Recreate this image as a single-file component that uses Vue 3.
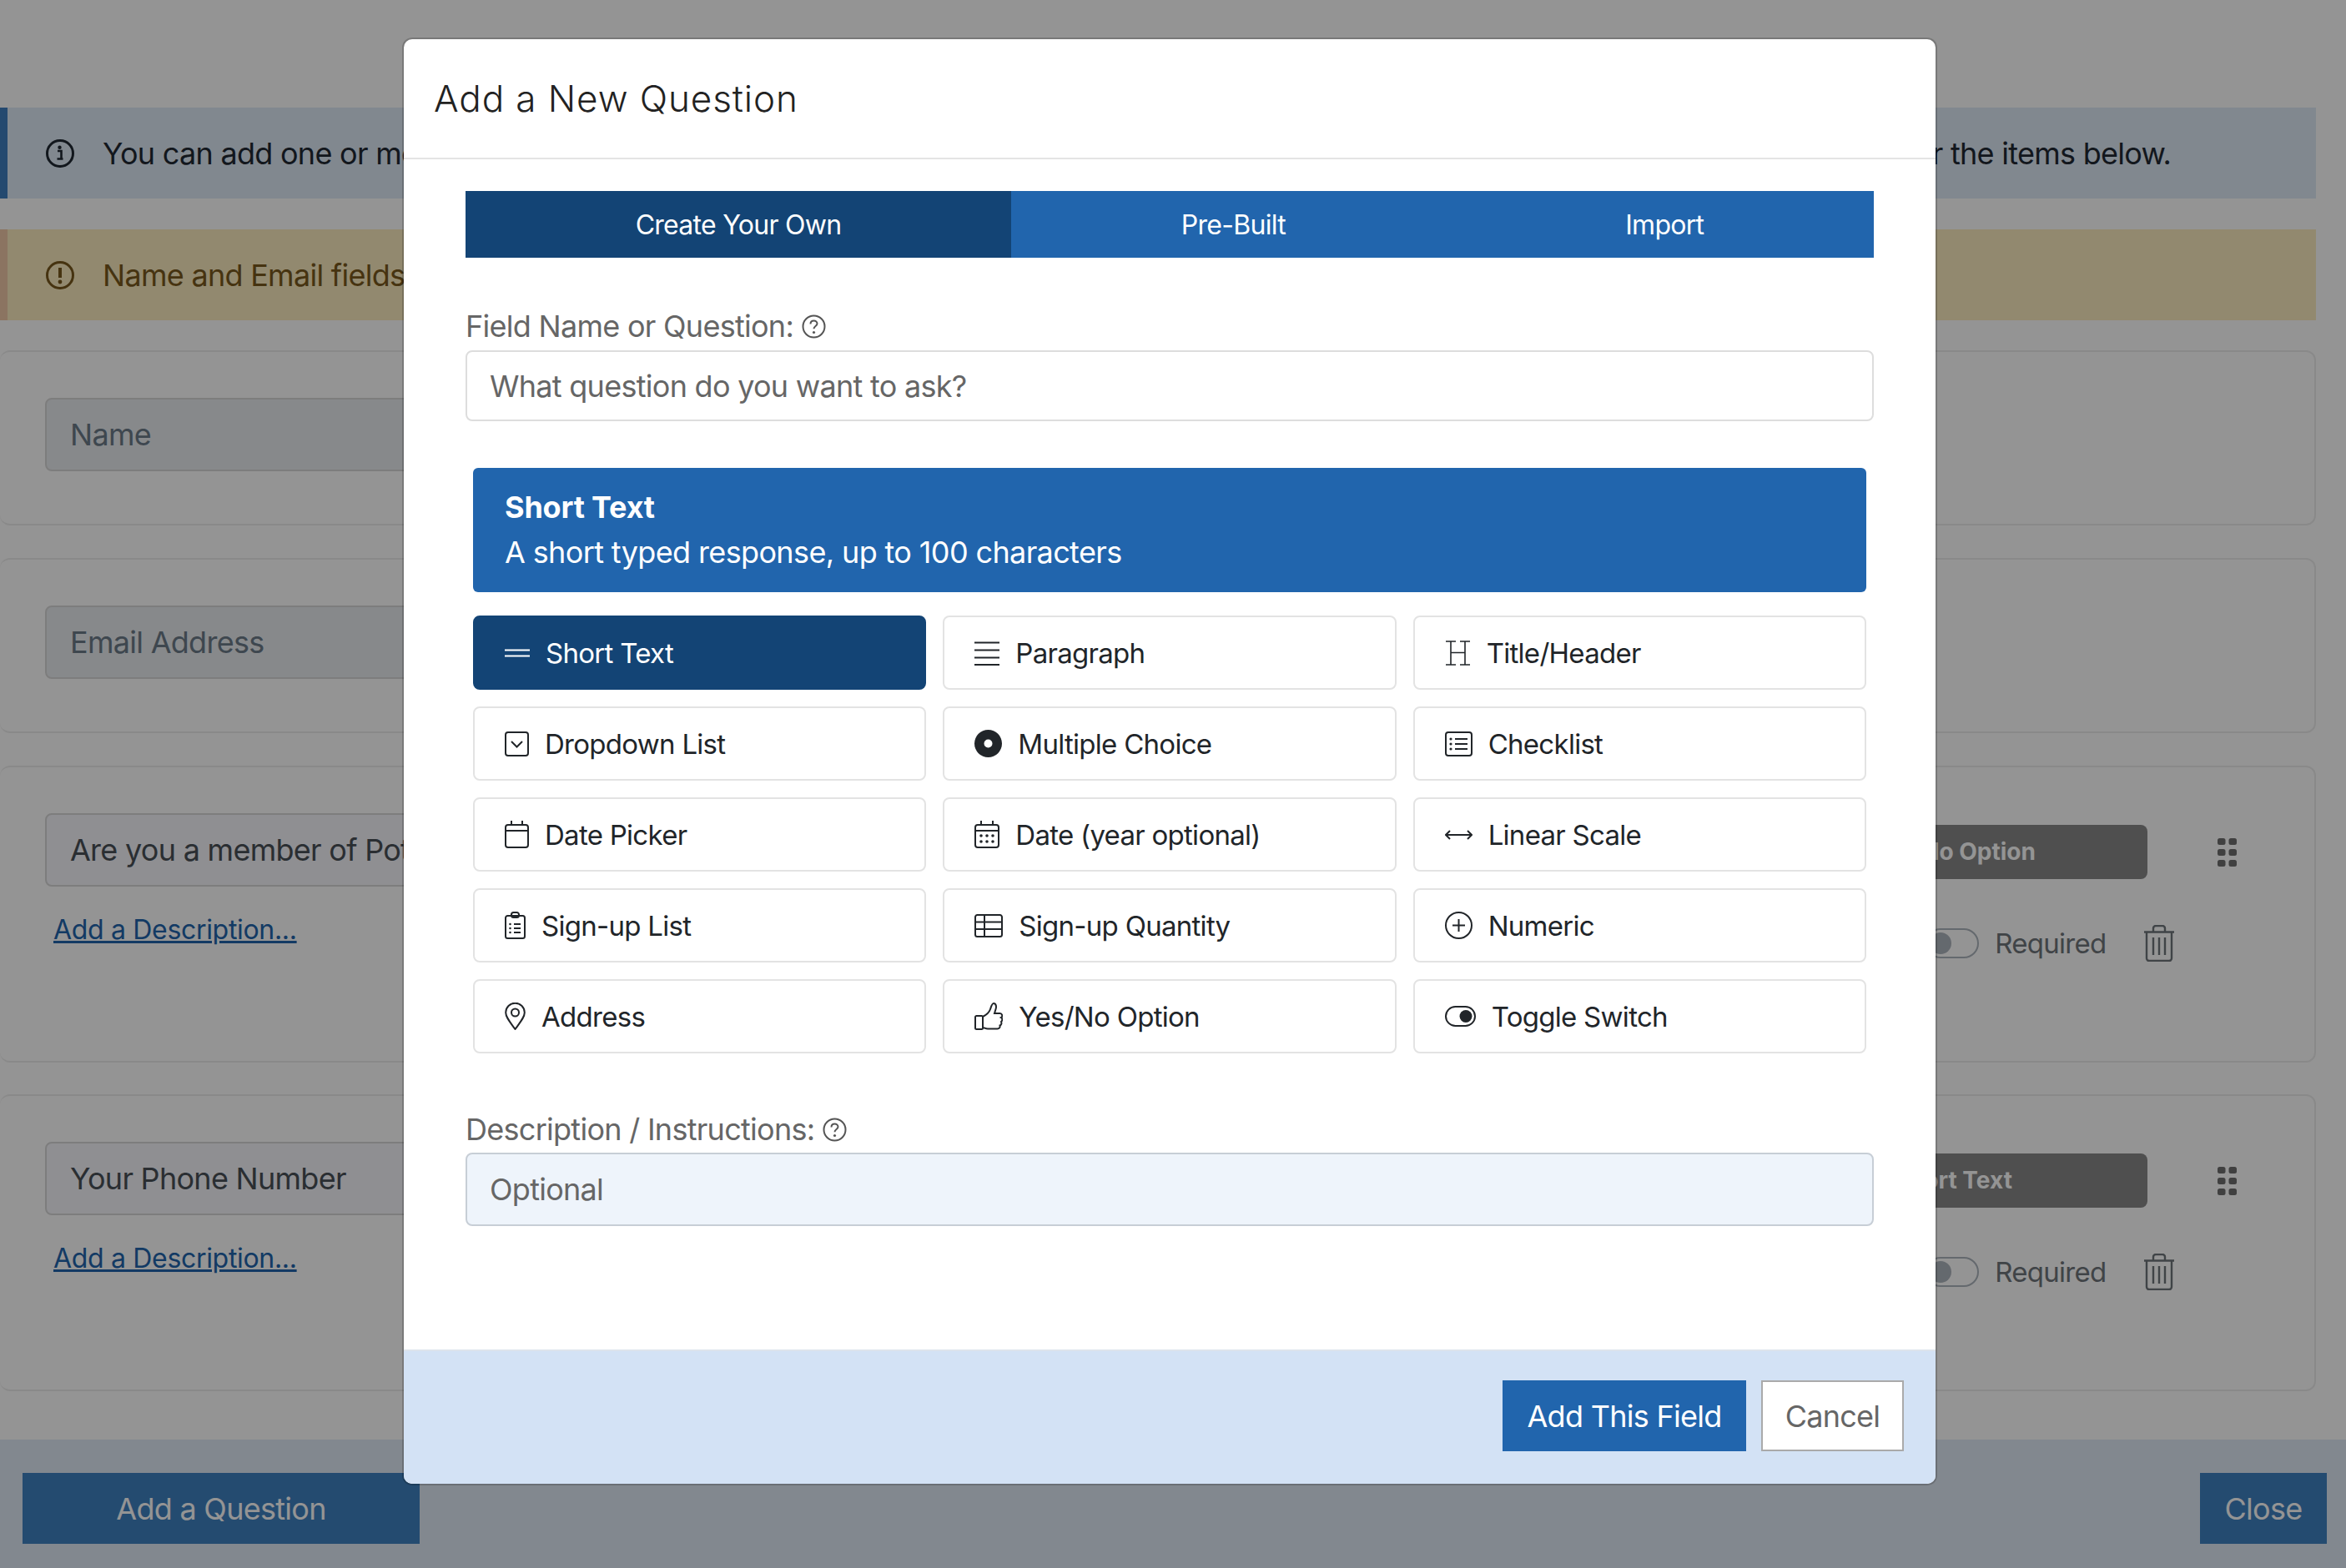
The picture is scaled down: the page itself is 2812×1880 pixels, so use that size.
<script setup>
const rr = (x, y, w, h, r) =>
  `M${x + r} ${y}h${w - 2 * r}a${r} ${r} 0 0 1 ${r} ${r}v${h - 2 * r}a${r} ${r} 0 0 1 ${-r} ${r}h${-(w - 2 * r)}a${r} ${r} 0 0 1 ${-r} ${-r}v${-(h - 2 * r)}a${r} ${r} 0 0 1 ${r} ${-r}z`
const circle = (cx, cy, r) =>
  `M${cx - r} ${cy}a${r} ${r} 0 1 0 ${2 * r} 0a${r} ${r} 0 1 0 ${-2 * r} 0z`

const types = [
  { name: 'Short Text', w: 30, h: 30, line: 'M0 11.5h30M0 18.5h30', active: true },
  { name: 'Paragraph', w: 30, h: 30, line: 'M0 2.5h30M0 11.5h30M0 20.5h30M0 29h30' },
  { name: 'Title/Header', w: 31, h: 30, sw: 1.6, line: 'M1 1h12M18 1h12M7 1v28M24 1v28M7 14.5h17M1 29h12M18 29h12' },
  { name: 'Dropdown List', w: 29, h: 30, line: rr(1, 1, 27, 28, 3) + 'M8 12l6.5 6.5L21 12' },
  { name: 'Multiple Choice', w: 33, h: 33, fill: circle(16.5, 16.5, 16.5) + circle(16.5, 16.5, 5) },
  { name: 'Checklist', w: 33, h: 30, line: rr(1, 1, 31, 28, 3) + 'M12 9h15M12 15h15M12 21h15', fill: circle(7, 9, 1.6) + circle(7, 15, 1.6) + circle(7, 21, 1.6) },
  { name: 'Date Picker', w: 29, h: 33, line: rr(1, 5, 27, 27, 3) + 'M1 12h27M8 0v6M21 0v6' },
  { name: 'Date (year optional)', w: 30, h: 33, line: rr(1, 5, 28, 27, 3) + 'M1 12h28M8 0v6M22 0v6', fill: circle(8, 18, 1.8) + circle(15, 18, 1.8) + circle(22, 18, 1.8) + circle(8, 25, 1.8) + circle(15, 25, 1.8) + circle(22, 25, 1.8) },
  { name: 'Linear Scale', w: 33, h: 16, line: 'M1 8h31M6 3L1 8l5 5M27 3l5 5-5 5' },
  { name: 'Sign-up List', w: 25, h: 33, line: rr(1, 5, 23, 27, 2.5) + rr(8, 1, 9, 6, 2.5) + 'M11 15h8M11 20h8M11 25h8', fill: circle(6.5, 15, 1.3) + circle(6.5, 20, 1.3) + circle(6.5, 25, 1.3) },
  { name: 'Sign-up Quantity', w: 34, h: 28, line: rr(1, 1, 32, 26, 2.5) + 'M1 9.5h32M1 18h32M12 1v26' },
  { name: 'Numeric', w: 33, h: 33, line: circle(16.5, 16.5, 15.5) + 'M16.5 9v15M9 16.5h15' },
  { name: 'Address', w: 25, h: 33, line: 'M12.5 32C6 23 1.2 17.5 1.2 12A11.3 11.3 0 0 1 23.8 12C23.8 17.5 19 23 12.5 32z' + circle(12.5, 12, 4.5) },
  { name: 'Yes/No Option', w: 34, h: 34, line: rr(1, 16, 9, 16, 1.5) + 'M10 17c4-2 8-6 9-9c1-3 2-7 4-7c3 0 3.5 4 2.5 7l-1.5 5h6.5c3 0 3.5 4 1.5 5c2 1 1.5 4 0 5c1 2 0 4-1.5 4.5c.5 2-.5 4-3 4H16c-3 0-4-1.5-6-1.5' },
  { name: 'Toggle Switch', w: 37, h: 25, line: rr(1, 1, 35, 23, 11.5), fill: circle(25, 12.5, 7.5) }
]

const helpCircle = circle(14.5, 14.5, 13)
const helpMark = 'M10.5 11.5c0-2.6 1.8-4 4-4s4 1.4 4 3.5c0 3-4 3-4 6.2'
const infoRing = circle(17, 17, 15.5)
const gripDots = [4, 17, 30]
</script>

<template>
  <div class="page">
    <div class="content">
      <div class="alert info">
        <svg width="34" height="34" viewBox="0 0 34 34" class="alert-icon">
          <path :d="infoRing" fill="none" stroke="currentColor" stroke-width="3" />
          <path d="M14 14h4.5v9.5h2M13.5 23.5h7" fill="none" stroke="currentColor" stroke-width="2.6" />
          <circle cx="16.5" cy="9.8" r="2.2" fill="currentColor" />
        </svg>
        <span>You can add one or more questions to this form using the button at the bottom of this panel. Once added, just drag and drop to re-order the items below.</span>
      </div>
      <div class="alert warn">
        <svg width="34" height="34" viewBox="0 0 34 34" class="alert-icon">
          <path :d="infoRing" fill="none" stroke="currentColor" stroke-width="3" />
          <path d="M17 8v12" fill="none" stroke="currentColor" stroke-width="4" />
          <circle cx="17" cy="25" r="2.4" fill="currentColor" />
        </svg>
        <span>Name and Email fields are required and can't be removed.</span>
      </div>

      <div class="card short">
        <div class="field locked">Name</div>
      </div>
      <div class="card short">
        <div class="field locked">Email Address</div>
      </div>

      <div class="card tall">
        <div class="q-left">
          <div class="field">Are you a member of Potomac?</div>
          <a class="add-desc">Add a Description...</a>
        </div>
        <div class="q-right">
          <div class="q-top">
            <div class="type-select">Yes/No Option</div>
            <svg class="grip" width="23" height="34" viewBox="0 0 23 34">
              <template v-for="y in gripDots" :key="y">
                <rect x="0" :y="y - 4" width="9.5" height="8" rx="2.5" />
                <rect x="13.5" :y="y - 4" width="9.5" height="8" rx="2.5" />
              </template>
            </svg>
          </div>
          <div class="q-bottom">
            <div class="switch"><i></i></div>
            <span class="required">Required</span>
            <svg class="trash" width="36" height="44" viewBox="0 0 36 44">
              <path d="M0 8.5h36M3 8.5V40a3 3 0 0 0 3 3h24a3 3 0 0 0 3-3V8.5M11 8V4a3 3 0 0 1 3-3h8a3 3 0 0 1 3 3v4M11 15v21M18 15v21M25 15v21" />
            </svg>
          </div>
        </div>
      </div>

      <div class="card tall">
        <div class="q-left">
          <div class="field">Your Phone Number</div>
          <a class="add-desc">Add a Description...</a>
        </div>
        <div class="q-right">
          <div class="q-top">
            <div class="type-select">Short Text</div>
            <svg class="grip" width="23" height="34" viewBox="0 0 23 34">
              <template v-for="y in gripDots" :key="y">
                <rect x="0" :y="y - 4" width="9.5" height="8" rx="2.5" />
                <rect x="13.5" :y="y - 4" width="9.5" height="8" rx="2.5" />
              </template>
            </svg>
          </div>
          <div class="q-bottom">
            <div class="switch"><i></i></div>
            <span class="required">Required</span>
            <svg class="trash" width="36" height="44" viewBox="0 0 36 44">
              <path d="M0 8.5h36M3 8.5V40a3 3 0 0 0 3 3h24a3 3 0 0 0 3-3V8.5M11 8V4a3 3 0 0 1 3-3h8a3 3 0 0 1 3 3v4M11 15v21M18 15v21M25 15v21" />
            </svg>
          </div>
        </div>
      </div>
    </div>

    <div class="bottom-bar">
      <button class="bar-btn add">Add a Question</button>
      <button class="bar-btn close">Close</button>
    </div>

    <div class="overlay"></div>

    <div class="modal">
      <div class="modal-head">Add a New Question</div>
      <div class="modal-body">
        <div class="tabs">
          <div class="tab on">Create Your Own</div>
          <div class="tab">Pre-Built</div>
          <div class="tab">Import</div>
        </div>

        <label class="lbl first">
          Field Name or Question:
          <svg width="29" height="29" viewBox="0 0 29 29">
            <path :d="helpCircle" />
            <path :d="helpMark" />
            <circle cx="14.5" cy="21.5" r="1.6" class="dot" />
          </svg>
        </label>
        <div class="text-input">What question do you want to ask?</div>

        <div class="banner">
          <strong>Short Text</strong>
          <span>A short typed response, up to 100 characters</span>
        </div>

        <div class="type-grid">
          <div v-for="t in types" :key="t.name" class="type-btn" :class="{ active: t.active }">
            <svg :width="t.w" :height="t.h" :viewBox="`0 0 ${t.w} ${t.h}`">
              <path v-if="t.line" :d="t.line" fill="none" stroke="currentColor" :stroke-width="t.sw || 2" />
              <path v-if="t.fill" :d="t.fill" fill="currentColor" fill-rule="evenodd" />
            </svg>
            <span>{{ t.name }}</span>
          </div>
        </div>

        <label class="lbl second">
          Description / Instructions:
          <svg width="29" height="29" viewBox="0 0 29 29">
            <path :d="helpCircle" />
            <path :d="helpMark" />
            <circle cx="14.5" cy="21.5" r="1.6" class="dot" />
          </svg>
        </label>
        <div class="text-input optional">Optional</div>
      </div>
      <div class="modal-foot">
        <button class="btn primary">Add This Field</button>
        <button class="btn cancel">Cancel</button>
      </div>
    </div>
  </div>
</template>

<style>
html, body {
  margin: 0;
  background: #fff;
}
</style>

<style scoped>
.page {
  position: relative;
  width: 2812px;
  height: 1880px;
  overflow: hidden;
  background: #fff;
  font-family: Inter, "Liberation Sans", sans-serif;
  font-size: 36px;
  letter-spacing: -0.02em;
  color: #212529;
}
.content {
  padding: 129px 36px 0 0;
}
.alert {
  display: flex;
  align-items: center;
  height: 109px;
  box-sizing: border-box;
  padding-left: 46px;
  margin-bottom: 37px;
  border-left: 9px solid;
  white-space: nowrap;
}
.alert-icon {
  margin-right: 34px;
  flex: none;
}
.info {
  background: #dfeaf6;
  border-color: #3f7fc0;
  color: #1f2933;
}
.warn {
  margin-bottom: 36px;
  background: #fbecc0;
  border-color: #f0c9a8;
  color: #79591c;
}
.card {
  display: flex;
  box-sizing: border-box;
  border: 2px solid #ededed;
  border-left: 0;
  border-radius: 12px;
  padding-top: 55px;
  padding-left: 54px;
}
.short {
  height: 210px;
  margin-bottom: 39px;
}
.tall {
  height: 356px;
  margin-bottom: 38px;
}
.field {
  height: 88px;
  box-sizing: border-box;
  display: flex;
  align-items: center;
  padding-left: 28px;
  background: #f6f6fb;
  border: 2px solid #d8d8d8;
  border-radius: 8px;
  color: #495057;
  white-space: nowrap;
  overflow: hidden;
}
.short .field {
  width: 1500px;
  background: #e9ecef;
  color: #6c7a89;
}
.q-left {
  width: 2000px;
}
.add-desc {
  display: block;
  margin: 32px 0 0 10px;
  font-size: 32px;
  letter-spacing: -0.01em;
  color: #2165ad;
  text-decoration: underline;
}
.q-right {
  margin-left: 31px;
  width: 690px;
  padding-top: 14px;
}
.q-top {
  display: flex;
  align-items: center;
}
.type-select {
  width: 490px;
  height: 65px;
  line-height: 65px;
  box-sizing: border-box;
  padding-left: 24px;
  text-align: center;
  background: #888;
  color: #fff;
  border-radius: 8px;
  font-size: 28px;
  font-weight: 700;
  letter-spacing: 0;
}
.grip {
  margin-left: 84px;
  fill: #6f6f6f;
}
.q-bottom {
  display: flex;
  align-items: center;
  margin-top: 55px;
  padding-left: 224px;
}
.switch {
  position: relative;
  width: 64px;
  height: 36px;
  box-sizing: border-box;
  border: 2px solid #adb5bd;
  border-radius: 18px;
}
.switch i {
  position: absolute;
  left: 3px;
  top: 3px;
  width: 26px;
  height: 26px;
  border-radius: 50%;
  background: #adb5bd;
}
.required {
  margin-left: 19px;
  font-size: 33px;
  color: #6f757b;
}
.trash {
  margin-left: 45px;
  fill: none;
  stroke: #6f757b;
  stroke-width: 2.4;
}
.bottom-bar {
  position: absolute;
  left: 0;
  right: 0;
  bottom: 0;
  height: 154px;
  box-sizing: border-box;
  padding: 40px 23px 0 27px;
  display: flex;
  justify-content: space-between;
  align-items: flex-start;
  background: #e0eaf6;
}
.bar-btn {
  height: 85px;
  border: 0;
  background: #3f81c1;
  color: #fff;
  font: inherit;
  letter-spacing: inherit;
}
.bar-btn.add {
  width: 476px;
}
.bar-btn.close {
  width: 152px;
}
.overlay {
  position: absolute;
  inset: 0;
  background: rgba(0, 0, 0, 0.42);
}
.modal {
  position: absolute;
  left: 484px;
  top: 47px;
  width: 1836px;
  height: 1732px;
  display: flex;
  flex-direction: column;
  background: #fff;
  border-radius: 10px;
  overflow: hidden;
  box-shadow: 0 0 0 2px rgba(0, 0, 0, 0.18);
}
.modal-head {
  height: 144px;
  box-sizing: border-box;
  padding: 0 0 0 36px;
  display: flex;
  align-items: center;
  border-bottom: 2px solid #e4e4e4;
  font-size: 44px;
  font-weight: 300;
  letter-spacing: 0.9px;
  color: #222;
}
.modal-body {
  flex: 1;
  padding: 38px 74px 0;
}
.tabs {
  display: flex;
  height: 80px;
  background: #2165ad;
  color: #fff;
  font-size: 32px;
}
.tab {
  flex: 1 1 auto;
  display: flex;
  align-items: center;
  justify-content: center;
}
.tab.on {
  background: #134475;
}
.lbl {
  display: flex;
  align-items: center;
  gap: 10px;
  height: 44px;
  color: #666;
  white-space: nowrap;
}
.lbl svg {
  fill: none;
  stroke: #555;
  stroke-width: 2;
}
.lbl .dot {
  fill: #555;
  stroke: none;
}
.first {
  margin: 60px 0 7px;
}
.second {
  margin: 69px 0 6px;
}
.text-input {
  height: 85px;
  box-sizing: border-box;
  display: flex;
  align-items: center;
  padding-left: 27px;
  border: 2px solid #ddd;
  border-radius: 8px;
  color: #666;
}
.optional {
  height: 88px;
  background: #eef4fb;
  border-color: #c7ced6;
}
.banner {
  margin: 56px 9px 0;
  height: 149px;
  box-sizing: border-box;
  padding: 20px 38px 0;
  display: flex;
  flex-direction: column;
  background: #2165ad;
  color: #fff;
  border-radius: 6px;
  line-height: 54px;
  letter-spacing: -0.0175em;
}
.banner strong {
  font-weight: 700;
  letter-spacing: -0.005em;
}
.type-grid {
  display: grid;
  grid-template-columns: repeat(3, 1fr);
  grid-auto-rows: 89px;
  gap: 20px;
  margin: 28px 9px 0;
}
.type-btn {
  display: flex;
  align-items: center;
  gap: 19px;
  padding-left: 36px;
  border: 2px solid #e3e3e3;
  border-radius: 8px;
  color: #212529;
  font-size: 33px;
  white-space: nowrap;
}
.type-btn.active {
  background: #134475;
  border-color: #134475;
  color: #fff;
}
.modal-foot {
  height: 161px;
  box-sizing: border-box;
  padding: 35px 38px 0 0;
  display: flex;
  justify-content: flex-end;
  gap: 18px;
  align-items: flex-start;
  background: #d3e2f5;
  border-top: 2px solid #dde4ec;
}
.btn {
  height: 85px;
  font: inherit;
  letter-spacing: inherit;
  padding: 0;
}
.primary {
  width: 292px;
  background: #2165ad;
  border: 0;
  color: #fff;
}
.cancel {
  width: 171px;
  background: #fff;
  border: 2px solid #aaa;
  color: #666;
}
</style>
